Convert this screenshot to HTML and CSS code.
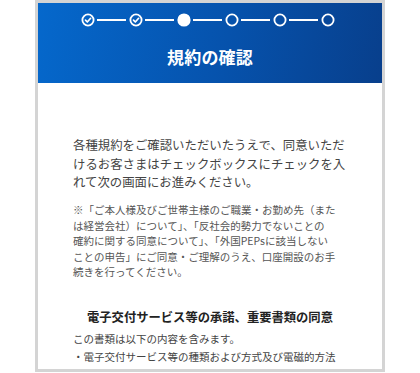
FILE: index.html
```html
<!DOCTYPE html>
<html lang="ja">
<head>
    <meta charset="UTF-8">
    <meta name="viewport" content="width=device-width, initial-scale=1.0">
    <title>規約の確認</title>
    <link rel="stylesheet" href="styles.css">
</head>
<body>
    <div class="phone">
        <header class="head">
            <ol class="steps">
                <li class="step done">
                    <svg viewBox="0 0 14 14" width="14" height="14"><circle cx="7" cy="7" r="5.6" fill="none" stroke="#fff" stroke-width="1.8"/><path d="M4.5 7.2 L6.3 9 L9.6 5.3" fill="none" stroke="#fff" stroke-width="1.7" stroke-linecap="round" stroke-linejoin="round"/></svg>
                </li>
                <li class="line"></li>
                <li class="step done">
                    <svg viewBox="0 0 14 14" width="14" height="14"><circle cx="7" cy="7" r="5.6" fill="none" stroke="#fff" stroke-width="1.8"/><path d="M4.5 7.2 L6.3 9 L9.6 5.3" fill="none" stroke="#fff" stroke-width="1.7" stroke-linecap="round" stroke-linejoin="round"/></svg>
                </li>
                <li class="line"></li>
                <li class="step current">
                    <svg viewBox="0 0 14 14" width="14" height="14"><circle cx="7" cy="7" r="6.6" fill="#fff"/></svg>
                </li>
                <li class="line"></li>
                <li class="step">
                    <svg viewBox="0 0 14 14" width="14" height="14"><circle cx="7" cy="7" r="5.6" fill="none" stroke="#fff" stroke-width="1.8"/></svg>
                </li>
                <li class="line"></li>
                <li class="step">
                    <svg viewBox="0 0 14 14" width="14" height="14"><circle cx="7" cy="7" r="5.6" fill="none" stroke="#fff" stroke-width="1.8"/></svg>
                </li>
                <li class="line"></li>
                <li class="step">
                    <svg viewBox="0 0 14 14" width="14" height="14"><circle cx="7" cy="7" r="5.6" fill="none" stroke="#fff" stroke-width="1.8"/></svg>
                </li>
            </ol>
            <h1 class="head-title">規約の確認</h1>
        </header>

        <main class="content">
            <p class="lead">各種規約をご確認いただいたうえで、同意いただ<br>けるお客さまはチェックボックスにチェックを入<br>れて次の画面にお進みください。</p>
            <p class="note">※「ご本人様及びご世帯主様のご職業・お勤め先（また<br>は経営会社）について」、「反社会的勢力でないことの<br>確約に関する同意について」、「外国PEPsに該当しない<br>ことの申告」にご同意・ご理解のうえ、口座開設のお手<br>続きを行ってください。</p>

            <h2 class="section-title">電子交付サービス等の承諾、重要書類の同意</h2>
            <p class="doc">この書類は以下の内容を含みます。<br>・電子交付サービス等の種類および方式及び電磁的方法<br>による登録について</p>
        </main>
    </div>
</body>
</html>
```

FILE: styles.css
```css
html{
    font-family: "Noto Sans CJK JP", "Noto Sans", sans-serif;
}

*,
*:before,
*:after{
    box-sizing: border-box;
}

body{
    margin: 0;
    padding: 0;
    background: #fff;
}

.phone{
    width: 350px;
    height: 372px;
    margin-left: 35px;
    border: 3px solid #d4d4d4;
    background: #fff;
    overflow: hidden;
}

/* cabecera azul */
.head{
    height: 80px;
    padding-top: 10px;
    background: linear-gradient(100deg, #0568cc 0%, #0652ac 55%, #083f8c 100%);
    color: #fff;
    text-align: center;
}

.steps{
    display: flex;
    align-items: center;
    justify-content: center;
    margin: 0;
    padding: 0 5px 0 0;
    list-style: none;
    height: 14px;
}

.step{
    width: 14px;
    height: 14px;
}

.step svg{
    display: block;
}

.line{
    width: 29px;
    height: 1.5px;
    margin: 0 2.5px;
    background: #fff;
}

.head-title{
    margin: 18px 0 0;
    font-size: 17px;
    line-height: 24px;
    font-weight: 700;
    letter-spacing: 0.2px;
}

/* contenido */
.content{
    padding: 53px 35px 0;
}

.lead{
    margin: 0 0 10px;
    font-size: 12.4px;
    line-height: 18.7px;
    color: #444;
    white-space: nowrap;
}

.note{
    margin: 0 0 28px;
    font-size: 10.5px;
    line-height: 15.5px;
    color: #555;
    white-space: nowrap;
}

.section-title{
    margin: 0 0 3.5px;
    font-size: 12.3px;
    line-height: 19px;
    font-weight: 700;
    color: #222;
    text-align: center;
    white-space: nowrap;
}

.doc{
    margin: 0;
    font-size: 10.5px;
    line-height: 18px;
    color: #444;
    white-space: nowrap;
}
```
